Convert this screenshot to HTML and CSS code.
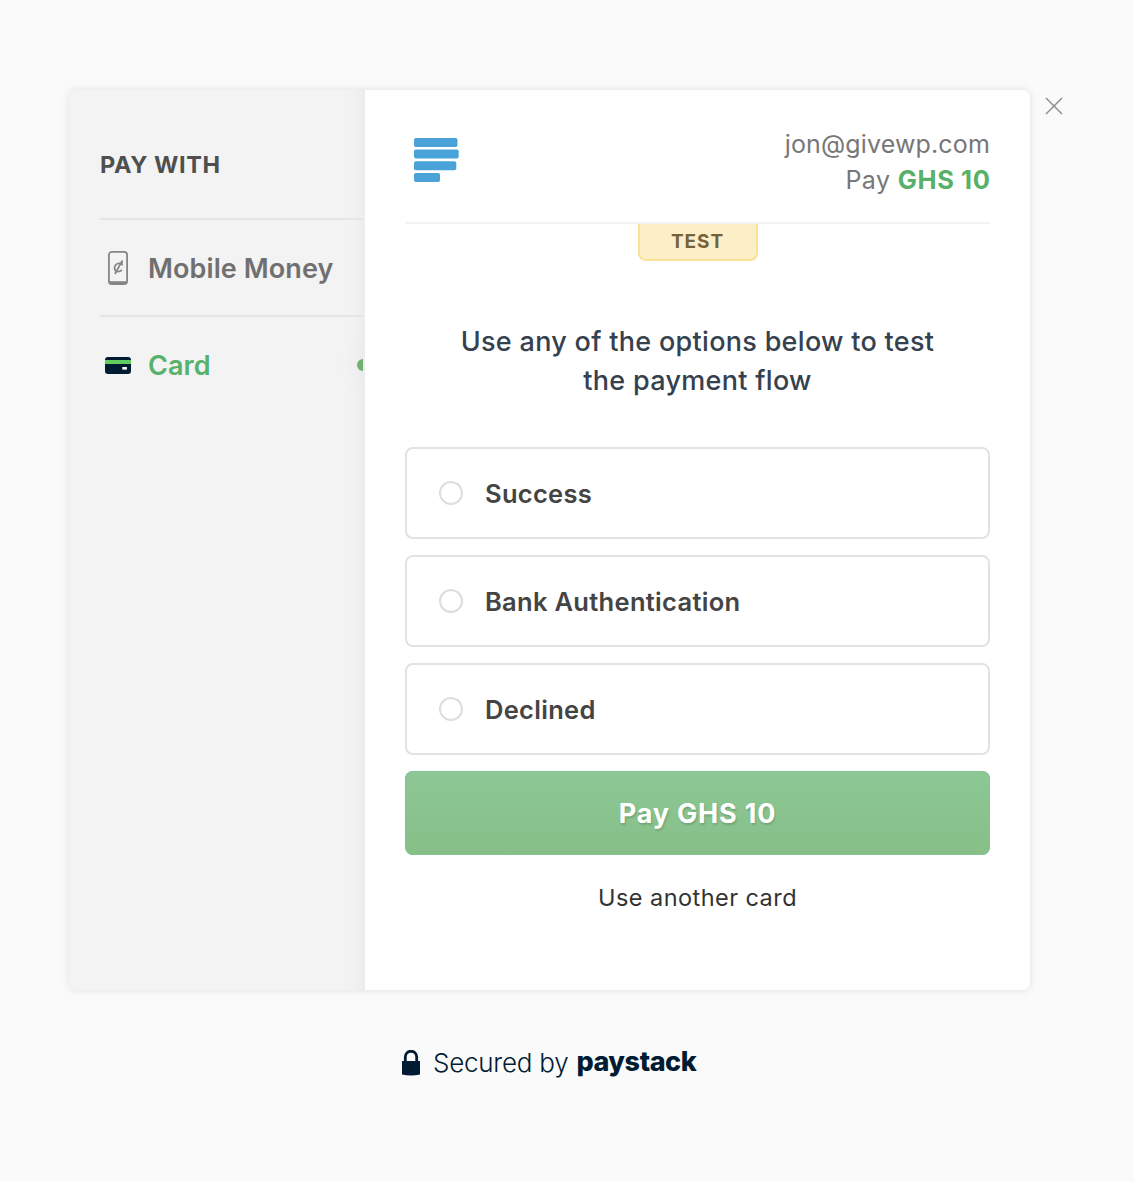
FILE: index.html
```html
<!DOCTYPE html>
<html lang="en">
<head>
<meta charset="utf-8">
<title>Paystack Checkout</title>
<link rel="stylesheet" href="styles.css">
</head>
<body>
<div class="checkout">
  <main class="modal">
    <aside class="channels">
      <h2 class="channels-title"><span>PAY WITH</span></h2>
      <ul class="channel-list">
        <li class="channel">
          <svg class="channel-icon" viewBox="0 0 36 36" width="36" height="36" fill="none" stroke="#858585">
            <rect x="8.900" y="1.900" width="18.200" height="32.200" rx="3" stroke-width="1.800"/>
            <path d="M9 32.600h18" stroke-width="2.800"/>
            <path d="M21.800 14.400c-3-2.600-7.300 0-7.300 3.600 0 4 4.600 4.600 7.400 1.800M22.400 10.300 15 24M22 11v4.500" stroke-width="1.700"/>
          </svg>
          <span>Mobile Money</span>
        </li>
        <li class="channel channel-active">
          <svg class="channel-icon" viewBox="0 0 36 36" width="36" height="36">
            <rect x="5" y="10" width="26" height="17" rx="3" fill="#011b33"/>
            <path d="M5 13h26v4H5z" fill="#60ce5e"/>
            <rect x="22.300" y="20" width="4.600" height="2.600" fill="#fff"/>
          </svg>
          <span>Card</span>
          <i class="active-dot"></i>
        </li>
      </ul>
    </aside>
    <section class="payment">
      <header class="merchant">
        <svg class="merchant-logo" viewBox="0 0 45 44" width="45" height="44" fill="#4aa3d8">
          <rect width="43.500" height="9" rx="2"/>
          <rect y="11.600" width="44.700" height="9" rx="2"/>
          <rect y="23.300" width="42.300" height="9" rx="2"/>
          <rect y="35" width="26" height="9" rx="2"/>
        </svg>
        <div class="customer">
          <div class="email">jon@givewp.com</div>
          <div class="amount">Pay <b>GHS 10</b></div>
        </div>
      </header>
      <div class="test-badge">TEST</div>
      <h1 class="prompt">Use any of the options below to test<br>the payment flow</h1>
      <form class="options">
        <label class="option"><i class="radio"></i><span>Success</span></label>
        <label class="option"><i class="radio"></i><span>Bank Authentication</span></label>
        <label class="option"><i class="radio"></i><span>Declined</span></label>
        <button class="pay" type="button"><span>Pay GHS 10</span></button>
      </form>
      <a class="another">Use another card</a>
    </section>
  </main>
  <svg class="close" viewBox="0 0 18 18" width="18" height="18" fill="none" stroke="#8e8e8e" stroke-width="1.500"><path d="m1 1 16 16M17 1 1 17"/></svg>
</div>
<footer class="secured">
  <svg class="lock" viewBox="0 0 18 26" width="18" height="26"><path d="M0 11h18v13.500q-9 2-18 0z" fill="#011b33"/><path d="M3.300 12V7.200C3.300-.7 14.700-.7 14.700 7.200V12" fill="none" stroke="#011b33" stroke-width="2.800"/></svg>
  <span class="secured-by">Secured by</span>
  <span class="brand">paystack</span>
</footer>
</body>
</html>
```

FILE: styles.css
```css
* { box-sizing: border-box; }
body {
  margin: 0;
  min-height: 1182px;
  padding: 90px 0 0 69px;
  background: #fafafa;
  font-family: Inter, "Liberation Sans", sans-serif;
  color: #444;
}
h1, h2, ul { margin: 0; padding: 0; font-weight: inherit; }
ul { list-style: none; }
svg { display: block; flex: none; }

.checkout { display: flex; align-items: flex-start; gap: 15px; }
.close { margin-top: 7px; }
.modal {
  display: flex;
  width: 961px;
  height: 900px;
  border-radius: 8px;
  background: #fff;
  box-shadow: 0 0 8px rgba(0, 0, 0, .11);
}

.channels {
  width: 296px;
  padding: 0 2px 0 31px;
  border-radius: 8px 0 0 8px;
  background: linear-gradient(to left, #ececec 0, #f1f1f1 10px, #f3f3f3 20px);
}
.channels-title {
  display: flex;
  align-items: center;
  height: 128px;
  padding-top: 20px;
  font-size: 23.5px;
  font-weight: 650;
  letter-spacing: .6px;
  color: #4f4f4f;
}
.channel {
  display: flex;
  align-items: center;
  gap: 12px;
  height: 97px;
  border-top: 2px solid #e5e5e5;
  font-size: 27px;
  font-weight: 600;
  letter-spacing: .1px;
  color: #707070;
}
.channel span { padding-top: 2px; }
.channel-active { color: #57b16a; overflow: hidden; }
.active-dot {
  flex: none;
  width: 12px;
  height: 12px;
  margin: 0 -6px 0 auto;
  border-radius: 50%;
  background: #70b070;
  box-shadow: 0 0 24px 2px rgba(80, 160, 80, .1);
}

.payment {
  display: flex;
  flex-direction: column;
  align-items: center;
  width: 665px;
  padding: 0 40px;
}
.merchant {
  display: flex;
  justify-content: space-between;
  width: 100%;
  height: 134px;
  border-bottom: 2px solid #f3f3f3;
}
.merchant-logo { margin: 48px 0 0 9px; }
.customer {
  margin-top: 36px;
  font-size: 25px;
  line-height: 36px;
  text-align: right;
  letter-spacing: .15px;
  color: #777;
}
.amount { letter-spacing: .4px; }
.customer b { font-size: 25.5px; font-weight: 700; letter-spacing: .6px; margin-right: -.5px; color: #57b16a; }
.test-badge {
  width: 120px;
  height: 37px;
  border: 2px solid #fbe195;
  border-top: 0;
  border-radius: 0 0 8px 8px;
  background: #fcefc7;
  font-size: 19px;
  line-height: 36px;
  font-weight: 700;
  letter-spacing: .9px;
  text-align: center;
  color: #75623a;
}
.prompt {
  margin-top: 61px;
  font-size: 27px;
  line-height: 39px;
  font-weight: 450;
  text-align: center;
  letter-spacing: .3px;
  white-space: nowrap;
  color: #35414f;
}
.options {
  display: grid;
  gap: 16px;
  width: 100%;
  margin-top: 47px;
}
.option {
  display: flex;
  align-items: center;
  gap: 22px;
  height: 92px;
  padding-left: 32px;
  border: 2px solid #e2e2e2;
  border-radius: 8px;
  font-size: 25.5px;
  font-weight: 600;
  letter-spacing: .3px;
}
.option span { padding-top: 1px; }
.radio {
  width: 24px;
  height: 24px;
  border: 2px solid #ddd;
  border-radius: 50%;
}
.pay {
  height: 84px;
  padding: 0;
  border: 0;
  border-radius: 8px;
  background: linear-gradient(#8cc795, #87bf87);
  box-shadow: inset 0 0 0 1px #84c492;
  font: 700 27px Inter, "Liberation Sans", sans-serif;
  letter-spacing: .8px;
  color: #fff;
  text-shadow: 1px 2px 2px rgba(0, 0, 0, .15);
}
.another {
  margin-top: 28px;
  font-size: 23.5px;
  line-height: 30px;
  font-weight: 400;
  letter-spacing: .45px;
  color: #333;
}

.secured {
  display: flex;
  align-items: center;
  height: 34px;
  margin: 56px 0 0 333px;
  color: #011b33;
  white-space: nowrap;
}
.secured-by { margin: -2px 0 0 13px; font-size: 26px; font-weight: 350; letter-spacing: -.25px; }
.brand {
  margin: -4px 0 0 8px;
  font-size: 27px;
  font-weight: 800;
  letter-spacing: -.45px;
}
```
